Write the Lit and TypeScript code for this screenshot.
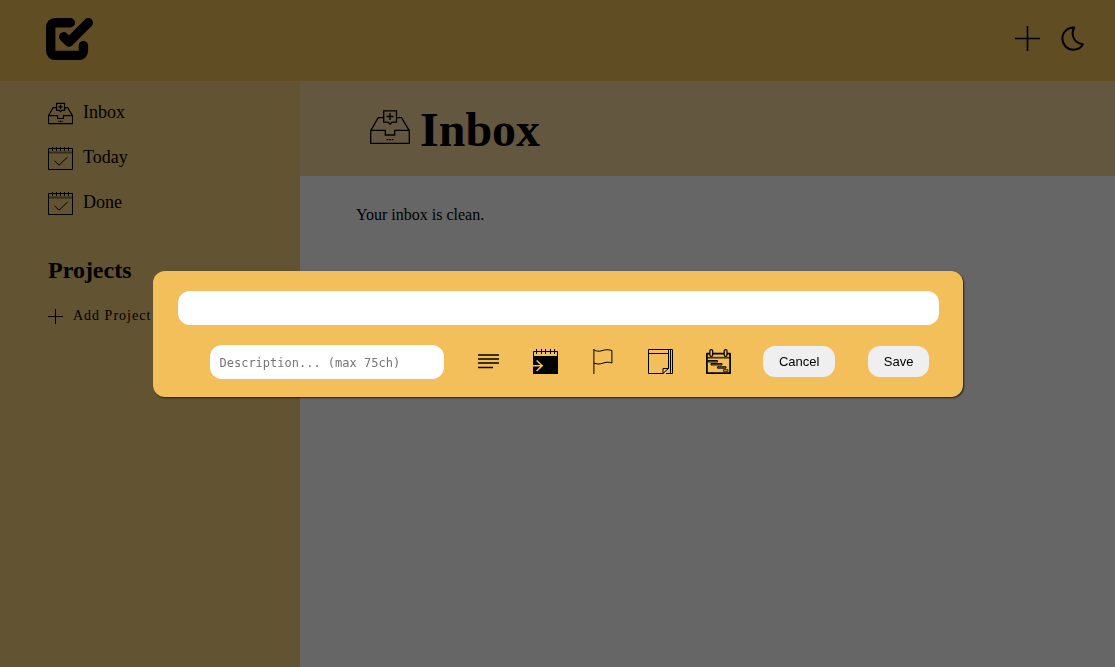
import { LitElement, html, css } from "lit";
import { customElement } from "lit/decorators.js";

const logo = html`<svg class="logo" viewBox="0 0 47 43" aria-hidden="true">
  <g fill="none" stroke="#000" stroke-width="9.4" stroke-linecap="round" stroke-linejoin="round">
    <path d="M24.3 4.7H9.5Q4.7 4.7 4.7 9.5V32.6Q4.7 37.4 9.5 37.4H32.6Q37.4 37.4 37.4 32.6V27.6" />
    <path d="M17.7 18.8L23.1 24L42.3 4.7" />
  </g>
</svg>`;

const plusThick = html`<svg class="icon" viewBox="0 0 25 25" aria-hidden="true">
  <path d="M12.5 0V25M0 12.5H25" stroke="#000" stroke-width="1.6" />
</svg>`;

const plusThin = html`<svg class="icon-small" viewBox="0 0 15 15" aria-hidden="true">
  <path d="M7.5 0V15M0 7.5H15" stroke="#000" stroke-width="1" />
</svg>`;

const moon = html`<svg class="icon" viewBox="0 0 25 25" aria-hidden="true">
  <path d="M14.2 1.6C7.8 1.2 2.4 6.2 2.4 12.6C2.4 18.8 7.3 23.7 13.2 23.7C17.6 23.7 21.2 21.7 22.9 18.3C17.8 17.5 14.2 14.6 13 10.2C12.2 7.2 12.7 4.2 14.2 1.6Z"
    fill="none" stroke="#000" stroke-width="2" stroke-linejoin="round" />
</svg>`;

const inbox = (cls: string, stroke: number) => html`<svg class=${cls} viewBox="0 0 40 40" aria-hidden="true">
  <g fill="none" stroke="#000" stroke-width=${stroke}>
    <path d="M.7 23.3H15.3V28H24.7V23.3H39.3V36.3H.7Z" />
    <path d="M.9 23.3L8.2 10.7H13.3M26.7 10.7H31.5L39.1 23.3" />
    <path d="M13.7 3.9H26.5V15.1H22L20 17.2L18 15.1H13.7Z" />
    <path d="M20 6V13M16.6 9.5H23.4" />
    <path d="M16.6 32.6H18.4M19.2 32.6H20.9M21.7 32.6H23.4" />
  </g>
</svg>`;

const calendarCheck = html`<svg class="icon" viewBox="0 0 25 25" aria-hidden="true">
  <g fill="none" stroke="#000">
    <path d="M.5 2.5H24.5V23.5H.5Z" />
    <path d="M4.5 1V5M8.5 1V5M12.5 1V5M16.5 1V5M20.5 1V5" />
    <path d="M1 6.5H24" stroke-width="2" opacity=".45" />
    <path d="M6.5 14.7L11 19.2L19.6 11" />
  </g>
</svg>`;

const lines = html`<svg class="icon" viewBox="0 0 25 25" aria-hidden="true">
  <path d="M2 6H23M2 10H23M2 14H23M2 18.5H17" stroke="#000" stroke-width="1.6" />
</svg>`;

const calendarArrow = html`<svg class="icon" viewBox="0 0 25 25" aria-hidden="true">
  <g fill="none" stroke="#000">
    <path d="M.5 2.5H24.5V24.5H.5Z" />
    <path d="M3.5 0V5M8.5 0V5M12.5 0V5M17.5 0V5M21.5 0V5" />
    <path d="M0 7H25V25H0Z" fill="#000" stroke="none" />
    <path d="M0 16.7H9M3.6 11.5L9.2 16.7L3.6 22" stroke="#f3bf5a" stroke-width="1.6" />
  </g>
</svg>`;

const flag = html`<svg class="icon" viewBox="0 0 25 25" aria-hidden="true">
  <g fill="none" stroke="#000">
    <path d="M2.9 0V25" />
    <path d="M2.9 .9C5.4 2.2 7.8 2.7 10.9 1.7C14.4 .4 17.4 .5 20.9 1.5V14C17.4 12.8 14.8 13.1 11.8 14.2C8.4 15.4 5.8 15.2 2.9 14" />
  </g>
</svg>`;

const notes = html`<svg class="icon" viewBox="0 0 25 25" aria-hidden="true">
  <g fill="none" stroke="#000">
    <path d="M15 24.5H.5V.5H20.5V19.5L15 24.5V19.5H20.5" />
    <path d="M.5 4.5H20.5" />
    <path d="M20 .5H24.5V24.5H18M22.5 .5V24.5" />
  </g>
</svg>`;

const schedule = html`<svg class="icon" viewBox="0 0 25 25" aria-hidden="true">
  <g fill="none" stroke="#000" stroke-linejoin="round">
    <path d="M3.9 4.7H.9V24.2H24.1V4.7H21M6.7 4.7H18.2" stroke-width="1.7" />
    <rect x="3.9" y=".6" width="2.8" height="6.8" rx="1.4" stroke-width="1.2" />
    <rect x="18.2" y=".6" width="2.8" height="6.8" rx="1.4" stroke-width="1.2" />
    <path d="M1 8.7H24" stroke-width="1.8" opacity=".7" />
    <path d="M2 11.5H11.5V13H2ZM5 14.5H16V16H5ZM11.5 17.7H20V19.2H11.5Z" fill="#000" fill-opacity=".4" stroke-width=".9" />
    <rect x="17.4" y="20.7" width="4.6" height="1.6" stroke-width=".8" />
  </g>
</svg>`;

@customElement("task-dialog")
class TaskDialog extends LitElement {
  static styles = css`
    :host {
      position: fixed;
      inset: 0;
      display: flex;
      align-items: center;
      justify-content: center;
      background: rgba(0, 0, 0, 0.6);
    }
    .panel {
      box-sizing: border-box;
      width: min(810px, 94vw);
      display: flex;
      flex-direction: column;
      gap: 20px;
      padding: 20px 24px 18px 25px;
      border-radius: 12px;
      background: #f3bf5a;
      box-shadow: 1px 1px 2px rgba(0, 0, 0, 0.7);
    }
    .field {
      box-sizing: border-box;
      height: 34px;
      margin: 0;
      padding: 10px;
      border: 0;
      border-radius: 12px;
      background: #fff;
      outline: none;
      resize: none;
      overflow: hidden;
      font: 12px/16px "DejaVu Sans Mono", monospace;
    }
    .field::placeholder {
      color: #757575;
    }
    .description {
      width: 234px;
    }
    .row {
      display: flex;
      align-items: center;
      justify-content: space-between;
      padding: 0 9px 0 32px;
    }
    .tool {
      display: flex;
      padding: 0;
      border: 0;
      background: none;
      cursor: pointer;
    }
    .icon {
      width: 25px;
      height: 25px;
    }
    .action {
      padding: 8px 16px;
      border: 0;
      border-radius: 12px;
      background: #efefef;
      color: #000;
      font: 13px/15px "Liberation Sans", sans-serif;
      cursor: pointer;
    }
  `;

  render() {
    return html`<form class="panel" role="dialog" aria-label="New task" @submit=${(e: Event) => e.preventDefault()}>
      <input class="field" type="text" aria-label="Title" />
      <div class="row">
        <textarea class="field description" maxlength="75" aria-label="Description" placeholder="Description... (max 75ch)"></textarea>
        <button class="tool" type="button" aria-label="Description">${lines}</button>
        <button class="tool" type="button" aria-label="Due date">${calendarArrow}</button>
        <button class="tool" type="button" aria-label="Priority">${flag}</button>
        <button class="tool" type="button" aria-label="Notes">${notes}</button>
        <button class="tool" type="button" aria-label="Project">${schedule}</button>
        <button class="action" type="button">Cancel</button>
        <button class="action" type="submit">Save</button>
      </div>
    </form>`;
  }
}

@customElement("app-root")
class AppRoot extends LitElement {
  static styles = css`
    :host {
      display: flex;
      flex-direction: column;
      min-height: 100vh;
      background: #fff;
      color: #000;
      font-family: "Liberation Serif", serif;
    }
    .top {
      display: flex;
      align-items: flex-start;
      justify-content: space-between;
      padding: 18px 30px 20px 46px;
      background: #f3c05a;
    }
    .top-actions {
      display: flex;
      gap: 20px;
      padding: 8px 0;
    }
    .plain {
      display: flex;
      align-items: center;
      padding: 0;
      border: 0;
      background: none;
      color: inherit;
      font-family: inherit;
      cursor: pointer;
    }
    .logo {
      display: block;
      width: 47px;
      height: 43px;
    }
    .icon {
      width: 25px;
      height: 25px;
    }
    .icon-small {
      width: 15px;
      height: 15px;
    }
    .icon-large {
      width: 40px;
      height: 40px;
    }
    .body {
      flex: 1;
      display: grid;
      grid-template-columns: 300px 1fr;
    }
    .side {
      padding: 10px 48px;
      background: #f5d07d;
    }
    .link {
      display: flex;
      align-items: center;
      gap: 10px;
      height: 45px;
      color: inherit;
      font-size: 18px;
      line-height: 20px;
      text-decoration: none;
    }
    .label {
      padding-bottom: 3px;
    }
    .projects {
      margin: 30px 0 24px;
      font-size: 24px;
      line-height: 28px;
    }
    .add {
      gap: 10px;
      font-size: 14px;
      line-height: 16px;
      letter-spacing: 1px;
    }
    .title-bar {
      display: flex;
      align-items: flex-start;
      gap: 10px;
      padding: 26px 70px 29px;
      background: #f8daa0;
    }
    .title {
      margin: 0;
      font-size: 48px;
      line-height: 46px;
      height: 40px;
    }
    .empty {
      margin: 30px 56px;
      font-size: 16px;
      line-height: 18px;
    }
  `;

  render() {
    return html`
      <header class="top">
        <a href="#" aria-label="Home">${logo}</a>
        <div class="top-actions">
          <button class="plain" type="button" aria-label="Add task">${plusThick}</button>
          <button class="plain" type="button" aria-label="Dark mode">${moon}</button>
        </div>
      </header>
      <div class="body">
        <nav class="side">
          <a class="link" href="#inbox">${inbox("icon", 1.9)}<span class="label">Inbox</span></a>
          <a class="link" href="#today">${calendarCheck}<span class="label">Today</span></a>
          <a class="link" href="#done">${calendarCheck}<span class="label">Done</span></a>
          <h2 class="projects">Projects</h2>
          <button class="plain add" type="button">${plusThin}<span>Add Project</span></button>
        </nav>
        <main>
          <div class="title-bar">${inbox("icon-large", 1.3)}<h1 class="title">Inbox</h1></div>
          <p class="empty">Your inbox is clean.</p>
        </main>
      </div>
      <task-dialog></task-dialog>
    `;
  }
}
